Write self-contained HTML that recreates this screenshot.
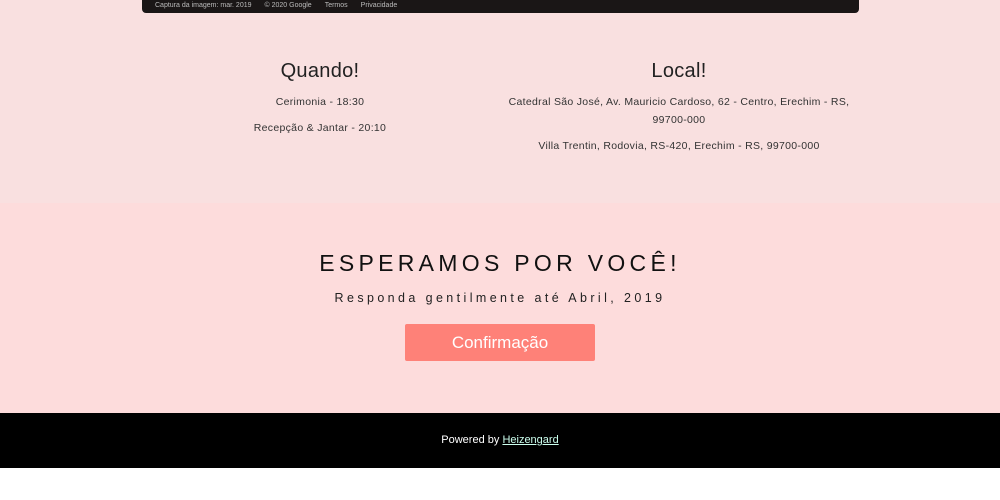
<!DOCTYPE html><html><head><style>
body{margin:0;width:1000px;height:500px;overflow:hidden;font-family:"Liberation Sans",sans-serif;background:#fff}
.top{position:absolute;left:0;top:0;width:1000px;height:203px;background:#f9e0e0}
.map{position:absolute;left:142px;top:0;width:717px;height:13px;background:#1a1616;border-radius:0 0 4px 4px;font-size:7px;color:#bbb;line-height:12px}
.map span{margin-left:13px}
.col{position:absolute;top:60px;text-align:center;color:#222}
.col h2{font-weight:normal;font-size:20px;margin:0 0 10px;letter-spacing:0.3px}
.col p{font-size:10.5px;margin:0 0 8px;line-height:18px;color:#333;letter-spacing:0.3px}
.mid{position:absolute;left:0;top:203px;width:1000px;height:210px;background:#fddcdc;text-align:center}
.mid h1{font-weight:normal;font-size:23px;letter-spacing:4.3px;margin:0;position:absolute;top:47px;width:100%;color:#111}
.mid .s{position:absolute;top:88px;width:100%;font-size:12.5px;letter-spacing:3.4px;color:#222}
.btn{position:absolute;left:405px;top:121px;width:190px;height:37px;background:#fe8178;border-radius:2px;color:#fff;font-size:17px;line-height:37px}
.foot{position:absolute;left:0;top:413px;width:1000px;height:55px;background:#000;color:#fff;font-size:11px;text-align:center;line-height:55px}
.foot u{color:#cfe}
</style></head><body>
<div class="top">
<div class="map"><span>Captura da imagem: mar. 2019</span><span>© 2020 Google</span><span>Termos</span><span>Privacidade</span></div>
<div class="col" style="left:220px;width:200px"><h2>Quando!</h2><p>Cerimonia - 18:30</p><p>Recepção &amp; Jantar - 20:10</p></div>
<div class="col" style="left:505px;width:348px"><h2>Local!</h2><p>Catedral São José, Av. Mauricio Cardoso, 62 - Centro, Erechim - RS, 99700-000</p><p>Villa Trentin, Rodovia, RS-420, Erechim - RS, 99700-000</p></div>
</div>
<div class="mid"><h1>ESPERAMOS POR VOCÊ!</h1><div class="s">Responda gentilmente até Abril, 2019</div><div class="btn">Confirmação</div></div>
<div class="foot">Powered by <u>Heizengard</u></div>
</body></html>
